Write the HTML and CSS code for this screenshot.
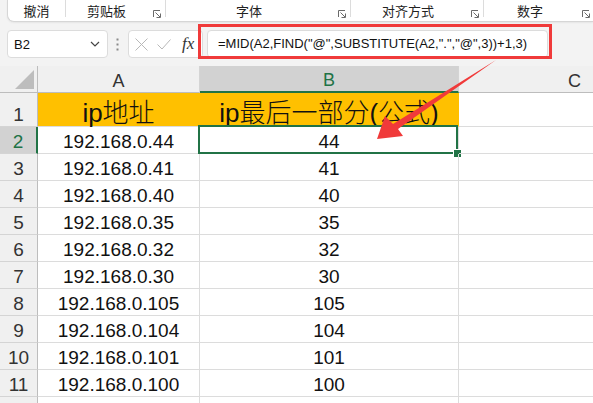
FILE: index.html
```html
<!DOCTYPE html>
<html lang="zh-CN">
<head>
<meta charset="utf-8">
<title>Excel</title>
<link rel="stylesheet" href="styles.css">
</head>
<body>
<div class="app">
  <div class="ribbon">
    <div class="grp g1"><div class="grp-in"><span class="lbl">撤消</span></div></div>
    <div class="grp g2"><div class="grp-in"><span class="lbl">剪贴板</span><svg class="launch" width="8" height="8" viewBox="0 0 8 8"><path d="M0.5 7 V0.5 H7" fill="none" stroke="#6a6a6a"/><path d="M2.5 2.5 L7 7 M3.5 7.5 H7.5 V3.5" fill="none" stroke="#6a6a6a"/></svg></div></div>
    <div class="grp g3"><div class="grp-in"><span class="lbl">字体</span><svg class="launch" width="8" height="8" viewBox="0 0 8 8"><path d="M0.5 7 V0.5 H7" fill="none" stroke="#6a6a6a"/><path d="M2.5 2.5 L7 7 M3.5 7.5 H7.5 V3.5" fill="none" stroke="#6a6a6a"/></svg></div></div>
    <div class="grp g4"><div class="grp-in"><span class="lbl">对齐方式</span><svg class="launch" width="8" height="8" viewBox="0 0 8 8"><path d="M0.5 7 V0.5 H7" fill="none" stroke="#6a6a6a"/><path d="M2.5 2.5 L7 7 M3.5 7.5 H7.5 V3.5" fill="none" stroke="#6a6a6a"/></svg></div></div>
    <div class="grp g5"><div class="grp-in"><span class="lbl">数字</span><svg class="launch" width="8" height="8" viewBox="0 0 8 8"><path d="M0.5 7 V0.5 H7" fill="none" stroke="#6a6a6a"/><path d="M2.5 2.5 L7 7 M3.5 7.5 H7.5 V3.5" fill="none" stroke="#6a6a6a"/></svg></div></div>
  </div>

  <div class="fbar">
    <div class="namebox">
      <span class="nb-text">B2</span>
      <svg width="10" height="6" viewBox="0 0 10 6"><path d="M1 1 L5 5 L9 1" fill="none" stroke="#444" stroke-width="1.2"/></svg>
    </div>
    <svg class="dots" width="3" height="13" viewBox="0 0 3 13"><rect x="0.5" y="0.5" width="2" height="2" fill="#8a8a8a"/><rect x="0.5" y="5.5" width="2" height="2" fill="#8a8a8a"/><rect x="0.5" y="10.5" width="2" height="2" fill="#8a8a8a"/></svg>
    <div class="fxbox">
      <svg width="13" height="13" viewBox="0 0 13 13"><path d="M0.5 0.5 L12.5 12.5 M12.5 0.5 L0.5 12.5" fill="none" stroke="#b8b8b8"/></svg>
      <svg width="14" height="11" viewBox="0 0 14 11"><path d="M0.5 5.5 L5 10 L13.5 0.5" fill="none" stroke="#b8b8b8"/></svg>
      <span class="fx">fx</span>
    </div>
    <div class="finput">=MID(A2,FIND("@",SUBSTITUTE(A2,".","@",3))+1,3)</div>
  </div>

  <div class="sheet">
    <div class="c corner"><span class="tri"></span></div>
    <div class="c ch">A</div>
    <div class="c ch sel">B</div>
    <div class="c ch">C</div>

    <div class="c rh">1</div>
    <div class="c hd">ip地址</div>
    <div class="c hd">ip最后一部分(公式)</div>
    <div class="c"></div>

    <div class="c rh sel">2</div>
    <div class="c v">192.168.0.44</div>
    <div class="c v active">44<span class="selbox"><span class="handle"></span></span></div>
    <div class="c"></div>

    <div class="c rh">3</div>
    <div class="c v">192.168.0.41</div>
    <div class="c v">41</div>
    <div class="c"></div>

    <div class="c rh">4</div>
    <div class="c v">192.168.0.40</div>
    <div class="c v">40</div>
    <div class="c"></div>

    <div class="c rh">5</div>
    <div class="c v">192.168.0.35</div>
    <div class="c v">35</div>
    <div class="c"></div>

    <div class="c rh">6</div>
    <div class="c v">192.168.0.32</div>
    <div class="c v">32</div>
    <div class="c"></div>

    <div class="c rh">7</div>
    <div class="c v">192.168.0.30</div>
    <div class="c v">30</div>
    <div class="c"></div>

    <div class="c rh">8</div>
    <div class="c v">192.168.0.105</div>
    <div class="c v">105</div>
    <div class="c"></div>

    <div class="c rh">9</div>
    <div class="c v">192.168.0.104</div>
    <div class="c v">104</div>
    <div class="c"></div>

    <div class="c rh">10</div>
    <div class="c v">192.168.0.101</div>
    <div class="c v">101</div>
    <div class="c"></div>

    <div class="c rh">11</div>
    <div class="c v">192.168.0.100</div>
    <div class="c v">100</div>
    <div class="c"></div>

    <div class="c rh"></div>
    <div class="c"></div>
    <div class="c"></div>
    <div class="c"></div>
  </div>

  <div class="redbox"></div>
  <svg class="arrow" width="593" height="403" viewBox="0 0 593 403">
    <polygon points="496,60 398,129 403,136 377,139 385,116 393,124" fill="#f03a3a"/>
  </svg>
</div>
</body>
</html>
```

FILE: styles.css
```css
* { box-sizing: border-box; }
html, body { margin: 0; padding: 0; }
body {
  background: #f3f3f3;
  font-family: "Liberation Sans", "Noto Sans CJK SC", sans-serif;
  color: #222;
}
.app {
  position: relative;
  width: 593px;
  height: 403px;
  overflow: hidden;
  background: #f3f3f3;
}

/* ribbon */
.ribbon {
  display: flex;
  height: 22px;
  margin-left: 7px;
  background: #fff;
  border-left: 1px solid #d6d6d6;
  border-bottom: 1px solid #d6d6d6;
  border-bottom-left-radius: 7px;
  box-shadow: 0 1px 2px rgba(0,0,0,0.06);
}
.grp { height: 21px; flex: none; }
.grp-in {
  height: 17px;
  display: flex;
  align-items: flex-start;
  border-right: 1px solid #dcdcdc;
}
.g1 { width: 58px; }
.g2 { width: 100px; }
.g3 { width: 185px; }
.g4 { width: 133px; }
.g5 { width: 110px; }
.g5 .grp-in { border-right: none; }
.lbl {
  flex: 1;
  text-align: center;
  font-family: "Noto Sans CJK SC", sans-serif;
  font-size: 13px;
  line-height: 15px;
  padding-top: 3px;
  color: #222;
}
.launch { flex: none; margin: 10px 4px 0 6px; }

/* formula bar */
.fbar {
  display: flex;
  align-items: center;
  padding: 8px 0 8px 7px;
  height: 44px;
}
.namebox {
  width: 101px;
  height: 28px;
  background: #fff;
  border: 1px solid #dcdcdc;
  border-radius: 4px;
  display: flex;
  align-items: center;
  justify-content: space-between;
  padding: 0 7px 0 6px;
}
.nb-text { font-size: 13px; color: #111; }
.dots { margin: 0 9px 0 8px; }
.fxbox {
  width: 75px;
  height: 28px;
  background: #fff;
  border: 1px solid #dcdcdc;
  border-radius: 4px;
  display: flex;
  align-items: center;
  gap: 9px;
  padding-left: 6px;
}
.fx {
  font-family: "Liberation Serif", serif;
  font-style: italic;
  font-size: 17px;
  color: #333;
  margin-left: 2px;
}
.finput {
  margin-left: 4px;
  width: 341px;
  height: 28px;
  background: #fff;
  border: 1px solid #dcdcdc;
  border-radius: 4px;
  font-size: 13px;
  line-height: 26px;
  padding-left: 10px;
  color: #111;
  white-space: nowrap;
}

/* sheet */
.sheet {
  display: grid;
  grid-template-columns: 38px 162px 259px 232px;
  grid-template-rows: 27px 34px repeat(11, 27px);
  background: #fff;
}
.c {
  border-right: 1px solid #dcdcdc;
  border-bottom: 1px solid #dcdcdc;
  display: flex;
  align-items: flex-end;
  justify-content: center;
  font-size: 19px;
  line-height: 22px;
  color: #111;
  position: relative;
  white-space: nowrap;
}
.corner {
  background: #f0f0f0;
  border-right-color: #bdbdbd;
  border-bottom-color: #bdbdbd;
}
.tri {
  position: absolute;
  right: 3px;
  bottom: 3px;
  width: 0;
  height: 0;
  border-left: 19px solid transparent;
  border-bottom: 19px solid #bdbdbd;
}
.ch {
  background: #f0f0f0;
  border-right-color: #d4d4d4;
  border-bottom-color: #bdbdbd;
  font-size: 18px;
  color: #333;
}
.ch.sel {
  background: #d2d2d2;
  border-bottom: 2px solid #217346;
  color: #217346;
}
.rh {
  background: #f0f0f0;
  border-right-color: #bdbdbd;
  border-bottom-color: #d4d4d4;
  color: #333;
}
.rh.sel {
  background: #d2d2d2;
  border-right: 2px solid #217346;
  color: #217346;
}
.hd {
  background: #ffc000;
  border-right-color: #ffc000;
  font-size: 26px;
  line-height: 26px;
  font-weight: 300;
  color: #111;
}
.selbox {
  position: absolute;
  left: -2px;
  top: -2px;
  right: 0;
  bottom: -1px;
  border: 2px solid #217346;
}
.handle {
  position: absolute;
  right: -5px;
  bottom: -5px;
  width: 7px;
  height: 7px;
  background: #217346;
  box-shadow: 0 0 0 1px #fff;
}

/* annotations */
.redbox {
  position: absolute;
  left: 198px;
  top: 24px;
  width: 354px;
  height: 35px;
  border: 3px solid #f03a3a;
}
.arrow {
  position: absolute;
  left: 0;
  top: 0;
  pointer-events: none;
}
```
